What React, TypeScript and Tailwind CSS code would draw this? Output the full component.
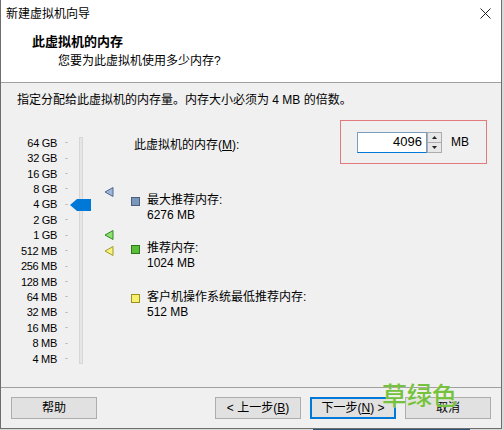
import React from "react";

const labels = [
  "64 GB", "32 GB", "16 GB", "8 GB", "4 GB", "2 GB", "1 GB", "512 MB",
  "256 MB", "128 MB", "64 MB", "32 MB", "16 MB", "8 MB", "4 MB",
];

function Marker({ fill, stroke, className }: { fill: string; stroke: string; className: string }) {
  return (
    <svg className={className} width="10" height="10" viewBox="0 0 10 10">
      <polygon points="9,0.5 9,9.5 1,5" fill={fill} stroke={stroke} strokeWidth="1" />
    </svg>
  );
}

function Legend({ color, border, title, value, className }: { color: string; border: string; title: string; value: string; className: string }) {
  return (
    <div className={"flex items-start " + className}>
      <div className="w-[9px] h-[9px] mt-[4px] border" style={{ backgroundColor: color, borderColor: border }} />
      <div className="ml-[7px] leading-[15px]">
        <div>{title}</div>
        <div>{value}</div>
      </div>
    </div>
  );
}

export default function App() {
  return (
    <div
      className="relative w-[504px] h-[430px] overflow-hidden bg-[#d9d9d9] text-[12px] text-black"
      style={{ fontFamily: '"Liberation Sans", "Noto Sans CJK SC", sans-serif' }}
    >
      <div className="flex flex-col w-[502px] h-[429px] border-l border-r border-b border-[#6e6e6e] bg-[#f0f0f0]">
        {/* Title bar */}
        <div className="h-[28px] bg-white flex items-center justify-between pl-[5px] pr-[10px]">
          <span className="leading-[16px]">新建虚拟机向导</span>
          <svg width="11" height="11" viewBox="0 0 11 11" className="mb-[2px]">
            <path d="M0.5 0.5 L10.5 10.5 M10.5 0.5 L0.5 10.5" stroke="#222" strokeWidth="1" />
          </svg>
        </div>
        {/* Header */}
        <div className="h-[55px] bg-white border-b border-[#a0a0a0] pl-[31px] pt-[5px]">
          <div className="font-bold text-[13px] leading-[18px]">此虚拟机的内存</div>
          <div className="pl-[26px] leading-[18px] mt-[1px]">您要为此虚拟机使用多少内存?</div>
        </div>
        {/* Body */}
        <div className="flex-1 flex flex-col">
          <div className="pl-[16px] pt-[9px] leading-[16px]">指定分配给此虚拟机的内存量。内存大小必须为 4 MB 的倍数。</div>
          <div className="flex mt-[12px]">
            {/* Slider */}
            <div className="relative w-[131px] flex shrink-0">
              <div className="w-[56px] pt-[15px] flex flex-col">
                {labels.map((l) => (
                  <div key={l} className="h-[15.43px] flex items-center justify-end leading-[12px] text-[11px] tracking-[-0.3px]">
                    {l}
                  </div>
                ))}
              </div>
              <div className="ml-[8px] w-[3px] pt-[15px] flex flex-col">
                {labels.map((l) => (
                  <div key={l} className="h-[15.43px] flex items-center">
                    <div className="w-[3px] h-[1px] bg-[#c4c4c4]" />
                  </div>
                ))}
              </div>
              <div className="ml-[11px] mt-[17px] w-[4px] h-[227px] bg-[#e6e6e6] border border-[#d6d6d6]" />
              <svg className="absolute left-[69px] top-[79px]" width="21" height="12" viewBox="0 0 21 12">
                <polygon points="0,6 7,0 21,0 21,12 7,12" fill="#0078d7" />
              </svg>
              <Marker className="absolute left-[103px] top-[67px]" fill="#9fb4d6" stroke="#4d6a94" />
              <Marker className="absolute left-[103px] top-[110px]" fill="#8ee070" stroke="#2f8a1e" />
              <Marker className="absolute left-[103px] top-[126px]" fill="#f6f27c" stroke="#a09a2a" />
            </div>
            {/* Right content */}
            <div className="flex-1 flex flex-col">
              <div className="flex items-start">
                <div className="mt-[17px] ml-[2px] leading-[16px]">
                  此虚拟机的内存(<span className="underline">M</span>):
                </div>
                <div className="ml-auto mr-[14px] w-[147px] h-[44px] border border-[#e07a7c] flex items-center pl-[16px]">
                  <div className="w-[70px] h-[21px] bg-white border border-[#7a9ebd] border-b-[#0078d7] flex items-center justify-end pr-[4px] text-[13px] leading-[16px]">
                    4096
                  </div>
                  <div className="w-[15px] h-[21px] flex flex-col border border-[#acacac] bg-[#e8e8e8]">
                    <div className="flex-1 flex items-center justify-center border-b border-[#acacac]">
                      <svg width="5" height="3" viewBox="0 0 5 3"><polygon points="0,3 2.5,0 5,3" fill="#222" /></svg>
                    </div>
                    <div className="flex-1 flex items-center justify-center">
                      <svg width="5" height="3" viewBox="0 0 5 3"><polygon points="0,0 2.5,3 5,0" fill="#222" /></svg>
                    </div>
                  </div>
                  <div className="ml-[9px] leading-[16px]">MB</div>
                </div>
              </div>
              <Legend className="mt-[29px] -ml-[1px]" color="#7b96bb" border="#4b5f7c" title="最大推荐内存:" value="6276 MB" />
              <Legend className="mt-[18px] -ml-[1px]" color="#5cbd38" border="#2c7a17" title="推荐内存:" value="1024 MB" />
              <Legend className="mt-[19px] -ml-[1px]" color="#f7f06c" border="#9a8f20" title="客户机操作系统最低推荐内存:" value="512 MB" />
            </div>
          </div>
        </div>
        {/* Buttons */}
        <div className="h-[41px] border-t border-[#a0a0a0] flex items-start pt-[9px] px-[10px]">
          <button className="w-[86px] h-[22px] bg-[#e1e1e1] border border-[#adadad] leading-[16px]">帮助</button>
          <button className="ml-auto w-[86px] h-[22px] bg-[#e1e1e1] border border-[#adadad] leading-[16px]">
            &lt; 上一步(<span className="underline">B</span>)
          </button>
          <button className="ml-[9px] w-[86px] h-[22px] bg-[#e1e1e1] border-2 border-[#0078d7] leading-[16px]">
            下一步(<span className="underline">N</span>) &gt;
          </button>
          <button className="ml-[9px] w-[86px] h-[22px] bg-[#e1e1e1] border border-[#adadad] leading-[16px]">取消</button>
        </div>
      </div>
      <div className="absolute left-[313px] bottom-0 w-[157px] h-[1px] bg-[#2d5277]" />
      <div
        className="absolute left-[382px] top-[377px] text-[25px] leading-[34px] font-medium text-[#76c13e]"
        style={{ fontFamily: '"Noto Sans CJK SC", sans-serif', textShadow: "0 0 1px #e8f5dc" }}
      >
        草绿色
      </div>
    </div>
  );
}
